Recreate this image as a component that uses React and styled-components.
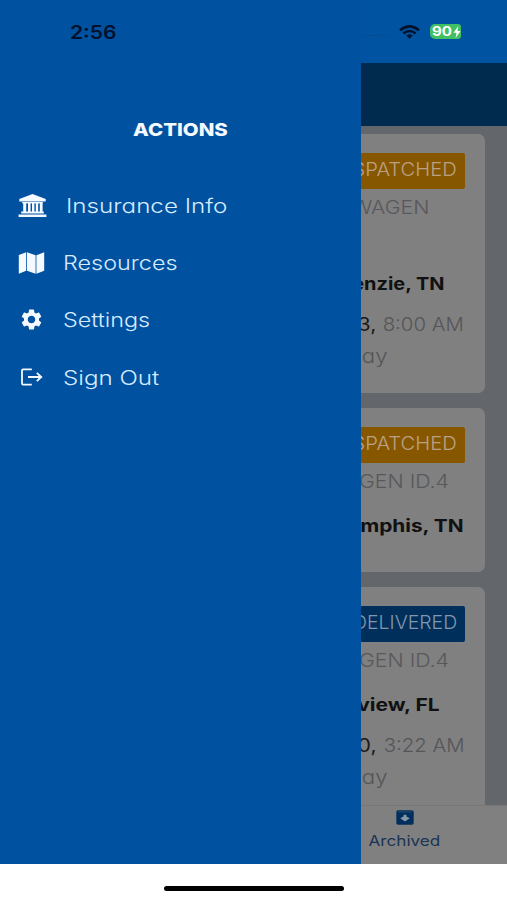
import React from "react";
import styled, { createGlobalStyle } from "styled-components";
import { MdSettings } from "react-icons/md";

const GlobalStyles = createGlobalStyle`
  * {
    box-sizing: border-box;
  }

  body {
    margin: 0;
    background: #fff;
    font-family: Inter, "Liberation Sans", sans-serif;
    font-feature-settings: "cv11";
  }
`;

const Screen = styled.div`
  position: relative;
  display: flex;
  flex-direction: column;
  width: 507px;
  height: 900px;
  overflow: hidden;
  background: #fff;
`;

const Wide = styled.span`
  display: inline-block;
  white-space: nowrap;
  transform: scaleX(${(props) => props.$stretch || 1.2});
  transform-origin: ${(props) => props.$from || "left"} center;
`;

const StatusBar = styled.div`
  position: absolute;
  z-index: 3;
  top: 0;
  left: 0;
  display: flex;
  align-items: center;
  width: 100%;
  height: 63px;
  padding: 0 46px 0 70px;
`;

const Clock = styled.div`
  flex: 1;
  padding-top: 1px;
  color: #00112e;
  font-size: 18px;
  font-weight: 600;
`;

const Signal = styled.div`
  width: 26px;
  margin: 8px 9px 0 0;
  border-top: 1px dashed #07498b;
`;

const Battery = styled.div`
  display: flex;
  align-items: center;
  width: 31px;
  height: 15px;
  margin-left: 10px;
  padding-left: 2px;
  border-radius: 5px 3px 3px 5px;
  background: #40bf63;
  color: #fff;
  font-size: 12.5px;
  font-weight: 700;
`;

const BoltSlot = styled.span`
  display: flex;
  margin-left: 4px;
`;

const TopInset = styled.div`
  height: 63px;
  background: #0053a0;
`;

const Header = styled.div`
  height: 63px;
  background: #002b4f;
`;

const List = styled.div`
  display: flex;
  flex: 1;
  flex-direction: column;
  gap: 15px;
  min-height: 0;
  padding: 8px 22px 0;
  overflow: hidden;
  background: #63676c;
`;

const Card = styled.div`
  display: flex;
  flex: none;
  flex-direction: column;
  align-items: flex-end;
  height: ${(props) => props.$height}px;
  padding: 19px 20px 0;
  border-radius: 7px;
  background: #808080;
`;

const Badge = styled.div`
  display: flex;
  justify-content: flex-end;
  width: 150px;
  height: 36px;
  padding-right: 8px;
  border-radius: 2px;
  background: ${(props) => (props.$delivered ? "#002f5b" : "#875700")};
  color: ${(props) => (props.$delivered ? "#8298ae" : "#b9a283")};
  font-size: 18.5px;
  font-weight: 300;
  line-height: 33px;
`;

const Model = styled.div`
  height: ${(props) => (props.$lines || 1) * 32}px;
  margin: 2px ${(props) => props.$inset}px 0 0;
  color: #58585c;
  font-size: 18.5px;
  font-weight: 300;
  line-height: 32px;
`;

const Place = styled.div`
  margin: 13px ${(props) => props.$inset}px 0 0;
  color: #111;
  font-size: 17.5px;
  font-weight: 700;
  line-height: 32px;
`;

const When = styled.div`
  display: flex;
  gap: 14px;
  margin: 8px 1px 0 0;
  color: #555559;
  font-size: 18.5px;
  font-weight: 300;
  line-height: 32px;
`;

const DayNumber = styled.span`
  color: #1a1a1a;
  font-weight: 400;
`;

const Relative = styled.div`
  margin-right: 77px;
  color: #555559;
  font-size: 18.5px;
  font-weight: 300;
  line-height: 33px;
`;

const TabBar = styled.div`
  display: flex;
  justify-content: flex-end;
  height: 59px;
  border-top: 1px solid #777;
  background: #808080;
`;

const Tab = styled.div`
  display: flex;
  flex-direction: column;
  align-items: center;
  width: 205px;
  padding-top: 4px;
  color: #1b3454;
  font-size: 14.5px;
  line-height: 18px;

  svg {
    margin-bottom: 7px;
  }
`;

const HomeArea = styled.div`
  display: flex;
  justify-content: center;
  height: 36px;
  padding: 22px 0 0 1px;
  background: #fff;
`;

const HomeIndicator = styled.div`
  width: 180px;
  height: 5px;
  border-radius: 3px;
  background: #000;
`;

const Drawer = styled.div`
  position: absolute;
  z-index: 2;
  top: 0;
  left: 0;
  width: 361px;
  height: 864px;
  padding-top: 114px;
  background: #0051a0;
`;

const DrawerTitle = styled.div`
  height: 30px;
  margin-bottom: 33px;
  color: #f4faff;
  font-size: 17.5px;
  font-weight: 800;
  line-height: 31px;
  text-align: center;
`;

const MenuItem = styled.div`
  display: flex;
  align-items: center;
  height: 57.2px;
  padding-left: 18px;
  color: #d6ebff;
  font-size: 19.5px;
  font-weight: 300;
`;

const MenuIcon = styled.div`
  display: flex;
  justify-content: ${(props) => (props.$centered ? "center" : "flex-start")};
  width: 27px;
  margin-right: ${(props) => props.$gap || 18}px;
  color: #f4faff;

  svg {
    flex: none;
  }
`;

const MenuLabel = styled.div`
  padding-top: 1px;
`;

function BankIcon() {
  return (
    <svg width="29" height="23" viewBox="0 0 29 23" fill="currentColor">
      <path d="M14.5 0 27.7 5v2.4H1.3V5z" />
      <path d="M4.2 8h20.6v1.4H4.2z" />
      <path d="M5.2 9h3v9h-3zM10 9h2.6v9H10zM14 9h2.4v9H14zM17.8 9h2.4v9h-2.4zM21.8 9h2.8v9h-2.8z" />
      <path d="M3.2 17.6h22.6v2H3.2zM.6 20.4h27.8V23H.6z" />
    </svg>
  );
}

function MapIcon() {
  return (
    <svg width="27" height="22" viewBox="0 0 27 22" fill="currentColor">
      <path d="M.8 3 8.2.2v18.6L.8 21.8zM9 .2l8.6 3v18.6L9 18.8zM18.4 3.2 26.2.2v18.6l-7.8 3z" />
    </svg>
  );
}

function SignOutIcon() {
  return (
    <svg width="22" height="18" viewBox="0 0 22 18" fill="none" stroke="currentColor" strokeWidth="1.8">
      <path d="M10.8 1.4H2.2Q1 1.4 1 2.6v12.8q0 1.2 1.2 1.2h8.6" />
      <path d="M7 9h13.5M15.8 4.9 20.3 9l-4.5 4.1" />
    </svg>
  );
}

function WifiIcon() {
  return (
    <svg width="21" height="14" viewBox="0 0 21 14" fill="none" stroke="#00142f" strokeWidth="2.6">
      <path d="M1 5.2Q10.5-2.5 20 5.2" />
      <path d="M4.4 8.5Q10.5 3.5 16.6 8.5" />
      <path d="M7.3 10.6Q10.5 8 13.7 10.6L10.5 13.8Z" fill="#00142f" stroke="none" />
    </svg>
  );
}

function BoltIcon() {
  return (
    <svg width="8" height="12" viewBox="0 0 8 12">
      <path d="M5.4 0 .5 6.8h3L2.6 12 7.6 5H4.5z" fill="#fff" />
    </svg>
  );
}

function ArchiveIcon() {
  return (
    <svg width="18" height="15" viewBox="0 0 18 15">
      <rect x="0.3" y="0.3" width="17.4" height="14.4" rx="1.8" fill="#002f5d" />
      <path d="M2 1.9h14" stroke="#385676" strokeWidth="0.8" />
      <path d="M7.6 4.8h2.8v1.8l3.4 1.6L9 11.4 4.2 8.2l3.4-1.6z" fill="#8998a6" />
    </svg>
  );
}

const menu = [
  { label: "Insurance Info", icon: <BankIcon />, gap: 21, stretch: 1.24 },
  { label: "Resources", icon: <MapIcon />, stretch: 1.2 },
  { label: "Settings", icon: <MdSettings size={25} />, centered: true, stretch: 1.2 },
  { label: "Sign Out", icon: <SignOutIcon />, centered: true, stretch: 1.24 },
];

const loads = [
  {
    height: 259,
    status: "DISPATCHED",
    statusStretch: 1.09,
    model: "VOLKSWAGEN",
    modelInset: 36,
    lines: 2,
    place: "McKenzie, TN",
    placeInset: 21,
    placeStretch: 1.14,
    day: "3,",
    time: "8:00 AM",
    relative: "day",
  },
  {
    height: 164,
    status: "DISPATCHED",
    statusStretch: 1.09,
    model: "WAGEN ID.4",
    modelInset: 16,
    place: "Memphis, TN",
    placeInset: 1,
    placeStretch: 1.19,
  },
  {
    height: 250,
    status: "DELIVERED",
    statusStretch: 1.05,
    delivered: true,
    model: "WAGEN ID.4",
    modelInset: 16,
    place: "view, FL",
    placeInset: 25,
    placeStretch: 1.2,
    day: "0,",
    time: "3:22 AM",
    relative: "day",
  },
];

function LoadCard({ load }) {
  return (
    <Card $height={load.height}>
      <Badge $delivered={load.delivered}>
        <Wide $from="right" $stretch={load.statusStretch}>{load.status}</Wide>
      </Badge>
      <Model $lines={load.lines} $inset={load.modelInset}>
        <Wide $from="right" $stretch={1.15}>{load.model}</Wide>
      </Model>
      <Place $inset={load.placeInset}>
        <Wide $from="right" $stretch={load.placeStretch}>{load.place}</Wide>
      </Place>
      {load.time && (
        <>
          <When>
            <DayNumber>
              <Wide $from="right" $stretch={1.15}>{load.day}</Wide>
            </DayNumber>
            <Wide $from="right" $stretch={1.1}>{load.time}</Wide>
          </When>
          <Relative>
            <Wide $from="right" $stretch={1.2}>{load.relative}</Wide>
          </Relative>
        </>
      )}
    </Card>
  );
}

function App() {
  return (
    <>
      <GlobalStyles />
      <Screen>
        <TopInset />
        <Header />
        <List>
          {loads.map((load, index) => (
            <LoadCard key={index} load={load} />
          ))}
        </List>
        <TabBar>
          <Tab>
            <ArchiveIcon />
            <Wide $from="center" $stretch={1.18}>Archived</Wide>
          </Tab>
        </TabBar>
        <HomeArea>
          <HomeIndicator />
        </HomeArea>

        <Drawer>
          <DrawerTitle>
            <Wide $from="center" $stretch={1.17}>ACTIONS</Wide>
          </DrawerTitle>
          {menu.map((item) => (
            <MenuItem key={item.label}>
              <MenuIcon $gap={item.gap} $centered={item.centered}>
                {item.icon}
              </MenuIcon>
              <MenuLabel>
                <Wide $stretch={item.stretch}>{item.label}</Wide>
              </MenuLabel>
            </MenuItem>
          ))}
        </Drawer>

        <StatusBar>
          <Clock>
            <Wide $stretch={1.17}>2:56</Wide>
          </Clock>
          <Signal />
          <WifiIcon />
          <Battery>
            <Wide $stretch={1.2}>90</Wide>
            <BoltSlot>
              <BoltIcon />
            </BoltSlot>
          </Battery>
        </StatusBar>
      </Screen>
    </>
  );
}

export default App;
